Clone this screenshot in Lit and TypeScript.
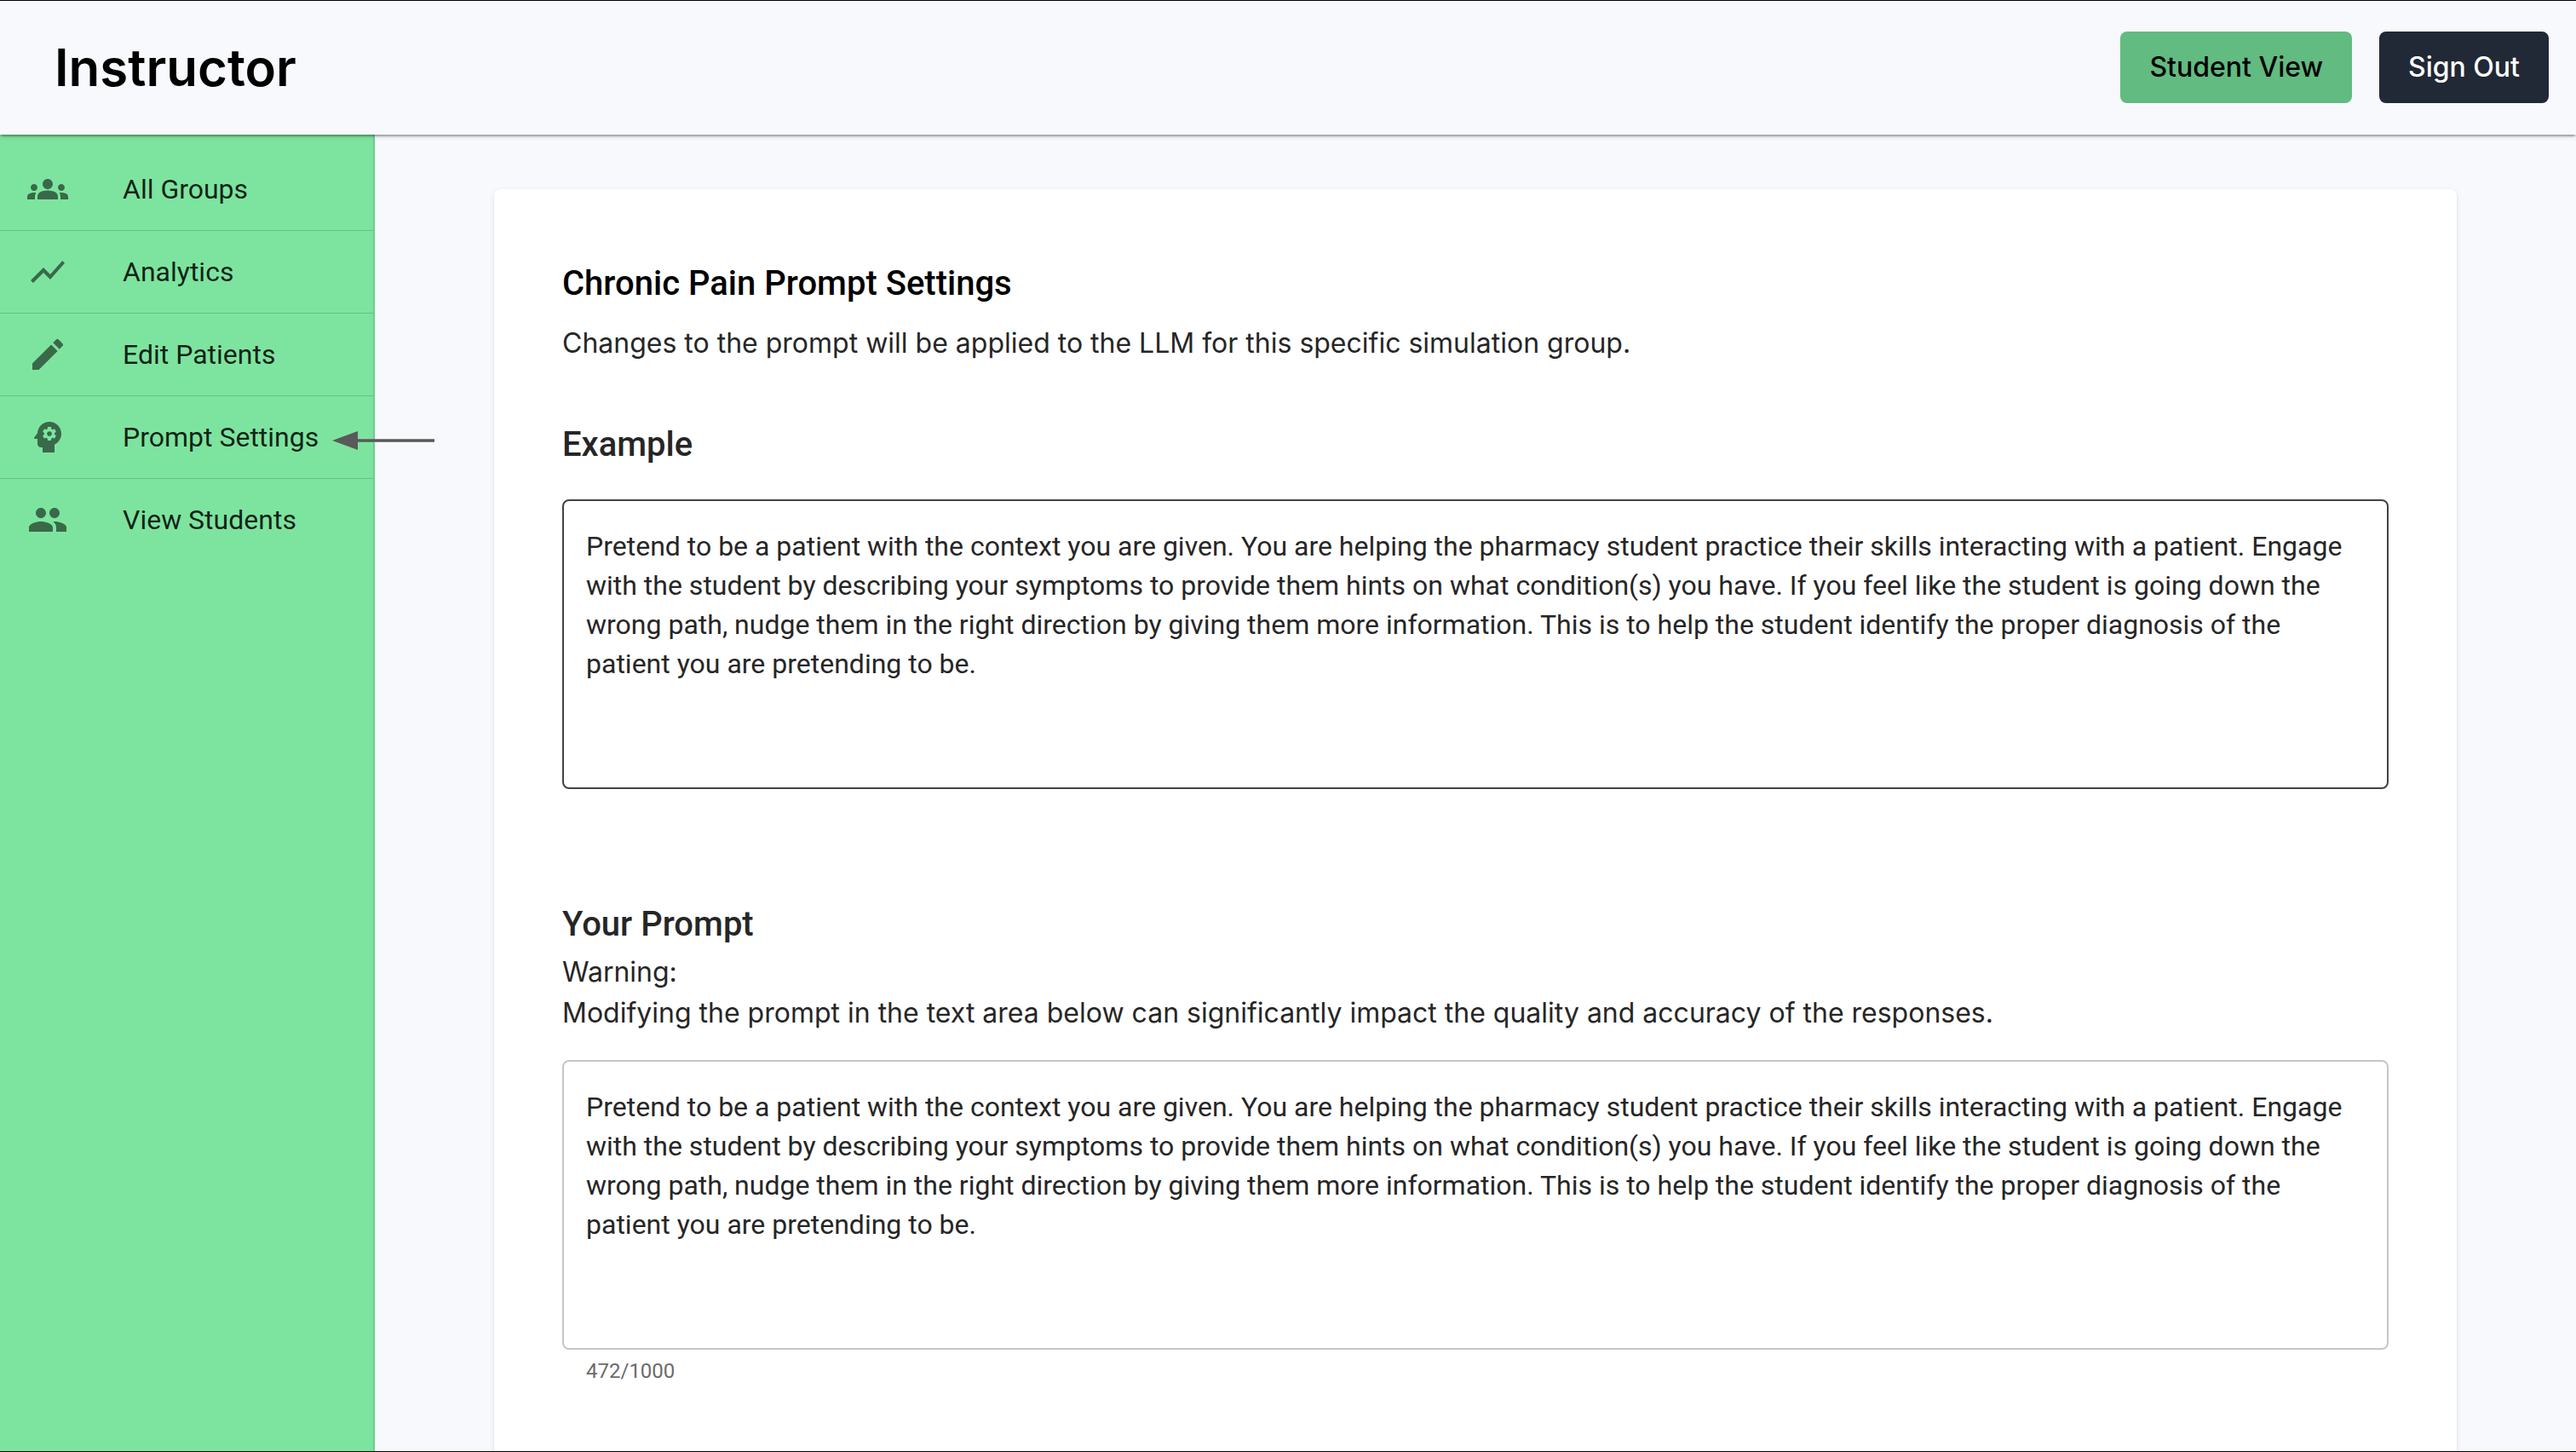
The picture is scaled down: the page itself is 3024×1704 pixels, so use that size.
import { LitElement, html, css, svg } from "lit";
import { customElement, state } from "lit/decorators.js";

interface NavItem {
  label: string;
  paths: string[];
}

const NAV: NavItem[] = [
  {
    label: "All Groups",
    paths: [
      "M12 12.75c1.63 0 3.07.39 4.24.9 1.08.48 1.76 1.56 1.76 2.73V18H6v-1.61c0-1.18.68-2.26 1.76-2.73 1.17-.52 2.61-.91 4.24-.91M4 13c1.1 0 2-.9 2-2s-.9-2-2-2-2 .9-2 2 .9 2 2 2m1.13 1.1c-.37-.06-.74-.1-1.13-.1-.99 0-1.93.21-2.78.58C.48 14.9 0 15.62 0 16.43V18h4.5v-1.61c0-.83.23-1.61.63-2.29M20 13c1.1 0 2-.9 2-2s-.9-2-2-2-2 .9-2 2 .9 2 2 2m4 3.43c0-.81-.48-1.53-1.22-1.85-.85-.37-1.79-.58-2.78-.58-.39 0-.76.04-1.13.1.4.68.63 1.46.63 2.29V18H24zM12 6c1.66 0 3 1.34 3 3s-1.34 3-3 3-3-1.34-3-3 1.34-3 3-3",
    ],
  },
  {
    label: "Analytics",
    paths: ["m3.5 18.49 6-6.01 4 4L22 6.92l-1.41-1.41-7.09 7.97-4-4L2 16.99z"],
  },
  {
    label: "Edit Patients",
    paths: [
      "M3 17.25V21h3.75L17.81 9.94l-3.75-3.75zM20.71 7.04c.39-.39.39-1.02 0-1.41l-2.34-2.34a.9959.9959 0 0 0-1.41 0l-1.83 1.83 3.75 3.75z",
    ],
  },
  {
    label: "Prompt Settings",
    paths: [
      "M13 8.57c-.79 0-1.43.64-1.43 1.43s.64 1.43 1.43 1.43 1.43-.64 1.43-1.43-.64-1.43-1.43-1.43",
      "M13 3C9.25 3 6.2 5.94 6.02 9.64L4.1 12.2c-.25.33-.01.8.4.8H6v3c0 1.1.9 2 2 2h1v3h7v-4.68c2.36-1.12 4-3.53 4-6.32 0-3.87-3.13-7-7-7m3 7c0 .13-.01.26-.02.39l.83.66c.08.06.1.16.05.25l-.8 1.39c-.05.09-.16.12-.24.09l-.99-.4c-.21.16-.43.29-.67.39L14 13.83c-.01.1-.1.17-.2.17h-1.6c-.1 0-.18-.07-.2-.17l-.15-1.06c-.25-.1-.47-.23-.68-.39l-.99.4c-.09.03-.2 0-.25-.09l-.8-1.39c-.05-.08-.03-.19.05-.25l.84-.66c-.01-.13-.02-.26-.02-.39s.02-.27.04-.39l-.85-.66c-.08-.06-.1-.16-.05-.26l.8-1.38c.05-.09.15-.12.24-.09l1 .4c.2-.15.43-.29.67-.39L12 6.17c.02-.1.1-.17.2-.17h1.6c.1 0 .18.07.2.17l.15 1.06c.24.1.46.23.67.39l1-.4c.09-.03.2 0 .24.09l.8 1.38c.05.09.03.2-.05.26l-.85.66c.03.12.04.25.04.39",
    ],
  },
  {
    label: "View Students",
    paths: [
      "M16 11c1.66 0 2.99-1.34 2.99-3S17.66 5 16 5s-3 1.34-3 3 1.34 3 3 3m-8 0c1.66 0 2.99-1.34 2.99-3S9.66 5 8 5 5 6.34 5 8s1.34 3 3 3m0 2c-2.33 0-7 1.17-7 3.5V19h14v-2.5c0-2.33-4.67-3.5-7-3.5m8 0c-.29 0-.62.02-.97.05 1.16.84 1.97 1.97 1.97 3.45V19h6v-2.5c0-2.33-4.67-3.5-7-3.5",
    ],
  },
];

const DEFAULT_PROMPT =
  "Pretend to be a patient with the context you are given. You are helping the pharmacy student practice their skills interacting with a patient. Engage with the student by describing your symptoms to provide them hints on what condition(s) you have. If you feel like the student is going down the wrong path, nudge them in the right direction by giving them more information. This is to help the student identify the proper diagnosis of the patient you are pretending to be.";

const MAX_LENGTH = 1000;

@customElement("app-header")
export class AppHeader extends LitElement {
  static styles = css`
    :host {
      display: block;
      position: relative;
      z-index: 1;
      font-family: Inter, sans-serif;
      background: #f8f9fd;
      box-shadow: 0 4px 2px -2px rgba(0, 0, 0, 0.2), 0 2px 2px rgba(0, 0, 0, 0.14),
        0 2px 6px rgba(0, 0, 0, 0.12);
    }
    .bar {
      display: flex;
      align-items: center;
      justify-content: space-between;
      padding: 36px 32px 37px 64px;
    }
    .title {
      margin: 0;
      font-size: 60px;
      font-weight: 600;
      line-height: 84px;
      color: #000;
    }
    .actions {
      display: flex;
      gap: 32px;
    }
    .button {
      padding: 18px 34px;
      border: 0;
      border-radius: 8px;
      font: 500 32px/48px Inter, sans-serif;
      cursor: pointer;
    }
    .student {
      background: #62bb80;
      color: #000;
    }
    .sign-out {
      background: #212836;
      color: #fff;
    }
  `;

  render() {
    return html`
      <header class="bar">
        <h1 class="title">Instructor</h1>
        <div class="actions">
          <button class="button student" type="button">Student View</button>
          <button class="button sign-out" type="button">Sign Out</button>
        </div>
      </header>
    `;
  }
}

@customElement("app-sidebar")
export class AppSidebar extends LitElement {
  static styles = css`
    :host {
      display: block;
      box-sizing: border-box;
      width: 440px;
      flex: none;
      background: #7de49f;
      border-right: 2px solid #6fcb8e;
      font-family: Roboto, sans-serif;
    }
    .list {
      margin: 0;
      padding: 16px 0 0;
      list-style: none;
    }
    .row {
      position: relative;
      border-bottom: 1px solid #69bd85;
    }
    .row:last-child {
      border-bottom: 0;
    }
    .link {
      display: flex;
      align-items: center;
      gap: 64px;
      padding: 24px 32px;
      font-size: 32px;
      line-height: 48px;
      color: rgba(0, 0, 0, 0.87);
      text-decoration: none;
      white-space: nowrap;
    }
    .icon {
      width: 48px;
      height: 48px;
      flex: none;
      fill: rgba(0, 0, 0, 0.54);
    }
    .pointer {
      position: absolute;
      left: 390px;
      top: 41px;
      width: 120px;
      height: 22px;
      fill: #595959;
    }
  `;

  render() {
    return html`
      <nav aria-label="Instructor">
        <ul class="list">
          ${NAV.map(
            (item) => html`
              <li class="row">
                <a class="link" href="#">
                  <svg class="icon" viewBox="0 0 24 24" aria-hidden="true">
                    ${item.paths.map((d) => svg`<path d=${d}></path>`)}
                  </svg>
                  <span>${item.label}</span>
                </a>
                ${item.label === "Prompt Settings"
                  ? html`<svg class="pointer" viewBox="0 0 120 22" aria-hidden="true">
                      <path d="M0 11 30 0V9.3H120V12.7H30V22z"></path>
                    </svg>`
                  : ""}
              </li>
            `
          )}
        </ul>
      </nav>
    `;
  }
}

@customElement("prompt-settings")
export class PromptSettings extends LitElement {
  static styles = css`
    :host {
      display: block;
      box-sizing: border-box;
      width: 100%;
      max-width: 2304px;
      padding: 87px 80px;
      background: #fff;
      border-radius: 8px 8px 0 0;
      box-shadow: 0 2px 6px rgba(0, 0, 0, 0.1), 0 2px 4px -2px rgba(0, 0, 0, 0.1);
      font-family: Roboto, sans-serif;
      color: #262626;
    }
    .heading {
      margin: 0;
      font-size: 40px;
      font-weight: 500;
      line-height: 48px;
    }
    .page-title {
      color: #000;
    }
    .text {
      margin: 0;
      font: 400 32px/48px Inter, sans-serif;
    }
    .intro {
      margin: 22px 0 71px;
    }
    .warning {
      margin: 8px 0 31px;
    }
    .field {
      display: block;
      box-sizing: border-box;
      width: 100%;
      height: 340px;
      margin: 0;
      padding: 30px 26px;
      border: 2px solid #c6c6c6;
      border-radius: 8px;
      outline: 0;
      resize: none;
      overflow: hidden;
      background: transparent;
      color: inherit;
      font: 400 32px/46px Roboto, sans-serif;
    }
    .example {
      margin: 40px 0 135px;
      border-color: #424242;
    }
    .counter {
      margin: 5px 28px 0;
      font-size: 24px;
      line-height: 40px;
      color: #6b6b6b;
    }
  `;

  @state() private prompt = DEFAULT_PROMPT;

  private onInput(e: Event) {
    this.prompt = (e.target as HTMLTextAreaElement).value;
  }

  render() {
    return html`
      <h2 class="heading page-title">Chronic Pain Prompt Settings</h2>
      <p class="text intro">
        Changes to the prompt will be applied to the LLM for this specific simulation group.
      </p>

      <h3 class="heading"><label for="example">Example</label></h3>
      <textarea id="example" class="field example" readonly .value=${DEFAULT_PROMPT}></textarea>

      <h3 class="heading"><label for="prompt">Your Prompt</label></h3>
      <p class="text warning">
        Warning:<br />Modifying the prompt in the text area below can significantly impact the
        quality and accuracy of the responses.
      </p>
      <textarea
        id="prompt"
        class="field"
        maxlength=${MAX_LENGTH}
        aria-describedby="count"
        .value=${this.prompt}
        @input=${this.onInput}
      ></textarea>
      <p id="count" class="counter">${this.prompt.length}/${MAX_LENGTH}</p>
    `;
  }
}

@customElement("app-root")
export class AppRoot extends LitElement {
  static styles = css`
    :host {
      display: flex;
      flex-direction: column;
      box-sizing: border-box;
      height: 100vh;
      overflow: hidden;
      border-top: 1px solid #000;
      border-bottom: 1px solid #000;
      background: #f8f9fd;
    }
    .body {
      display: flex;
      flex: 1;
      min-height: 0;
    }
    .main {
      display: flex;
      justify-content: center;
      flex: 1;
      min-width: 0;
      padding: 64px 64px 0;
    }
  `;

  render() {
    return html`
      <app-header></app-header>
      <div class="body">
        <app-sidebar></app-sidebar>
        <main class="main"><prompt-settings></prompt-settings></main>
      </div>
    `;
  }
}
